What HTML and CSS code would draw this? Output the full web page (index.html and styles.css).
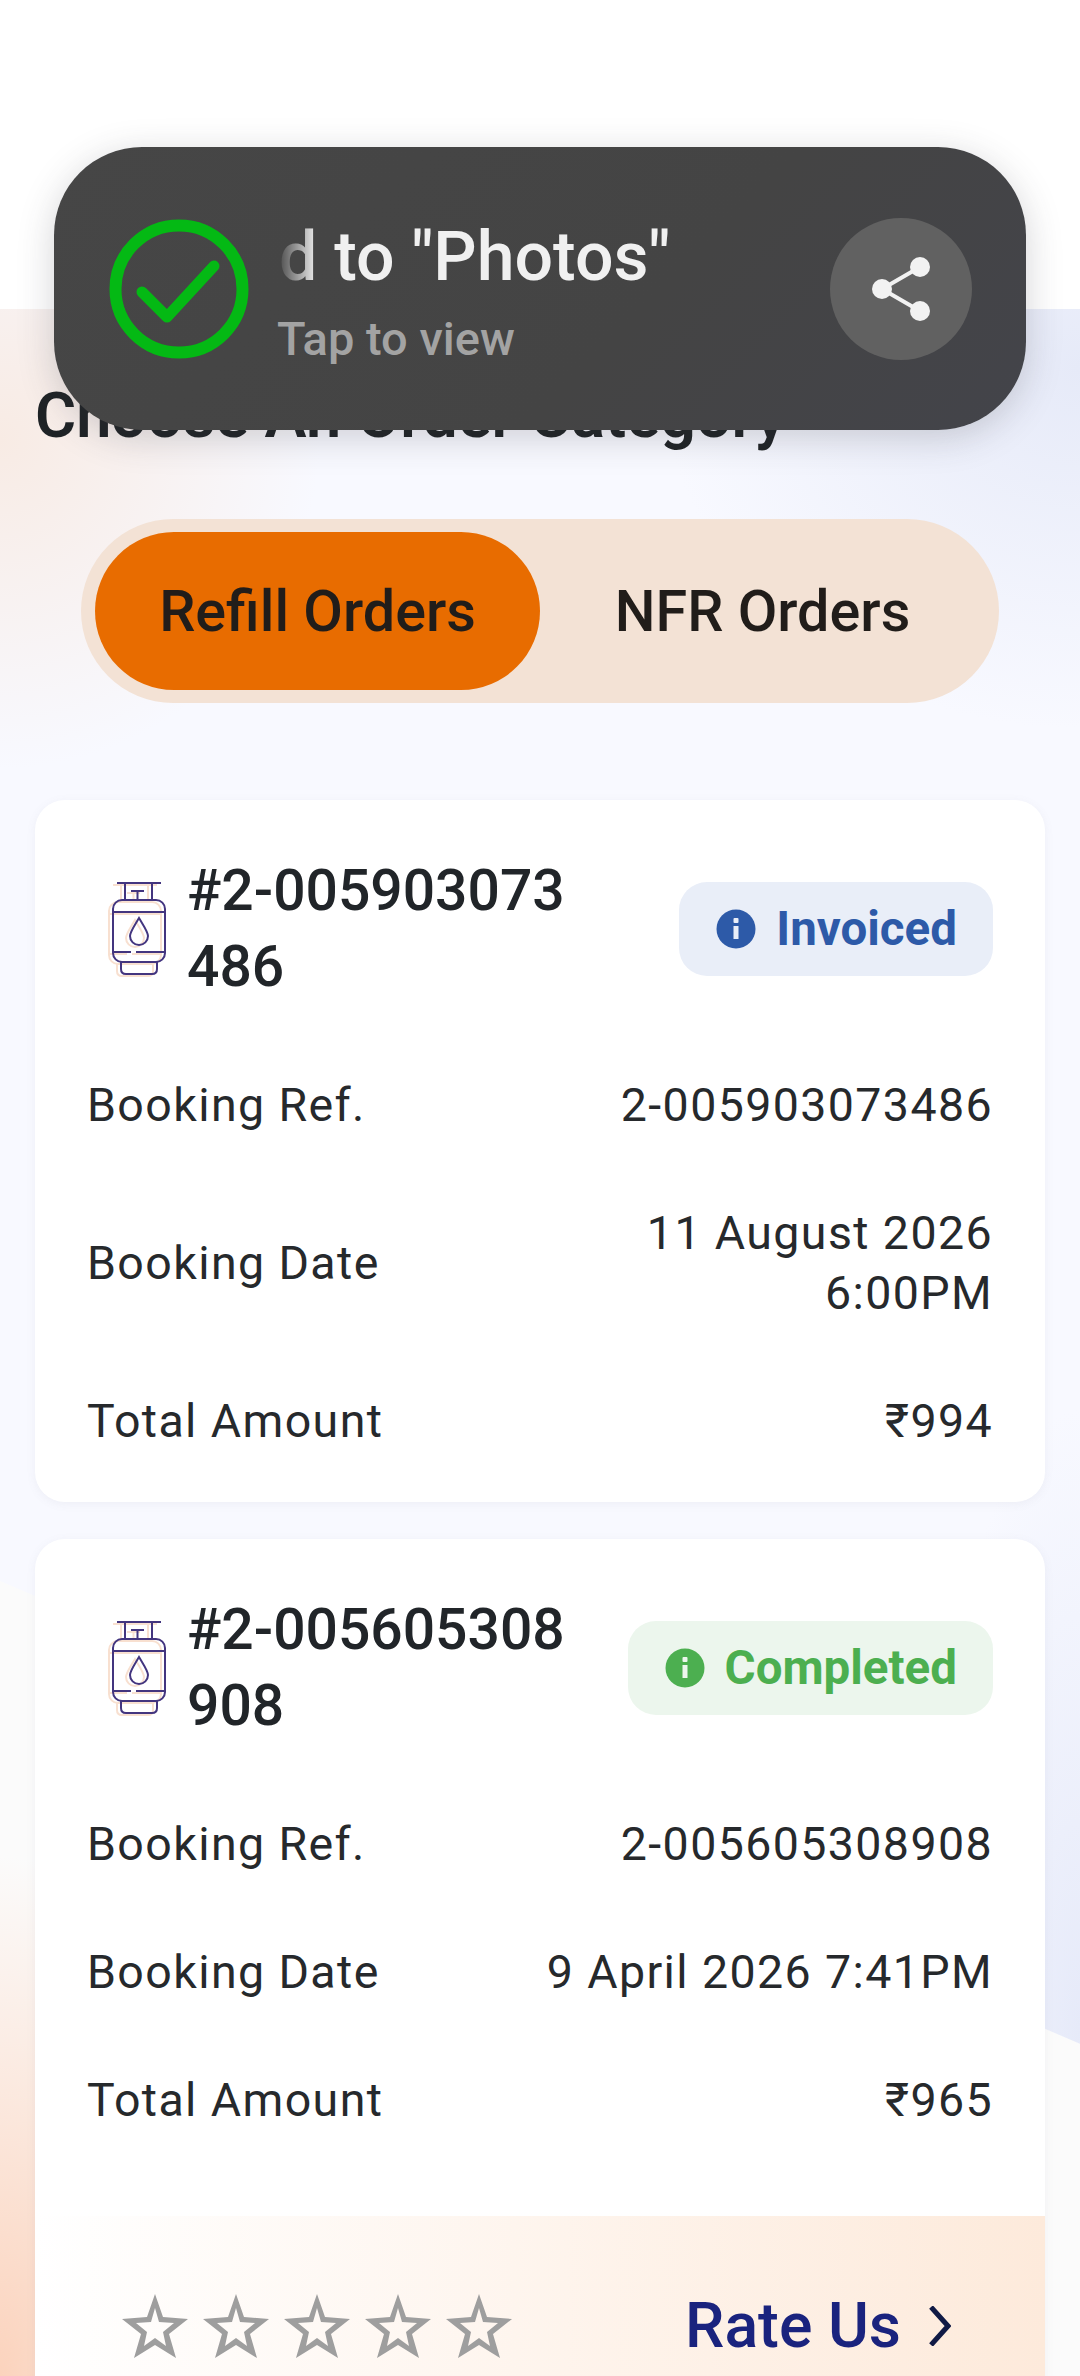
FILE: index.html
```html
<!DOCTYPE html>
<html lang="en">
<head>
    <meta charset="UTF-8">
    <meta name="viewport" content="width=device-width, initial-scale=1.0">
    <title>Choose An Order Category</title>
    <link rel="stylesheet" href="styles.css">
</head>
<body>

<svg class="defs" width="0" height="0">
    <symbol id="cylinder-lines" viewBox="0 0 64 98">
        <path d="M12 3h44M20 3v17M47 3v17M26 11h13M32.500 11v9"/>
        <rect x="8" y="20" width="52" height="62" rx="9"/>
        <path d="M8 32h52M8 72h18M31 72h29M16 82v7q0 5 5 5h26q5 0 5-5v-7"/>
        <path d="M34 38c6 10 9 14 9 18a9 9 0 0 1-18 0c0-4 3-8 9-18z"/>
    </symbol>
    <symbol id="info" viewBox="0 0 40 40">
        <circle cx="20" cy="20" r="19.500" fill="currentColor"/>
        <rect x="17.500" y="9" width="5" height="5" rx="1" fill="var(--info-dot)"/>
        <rect x="17.500" y="17" width="5" height="13" fill="var(--info-dot)"/>
    </symbol>
    <symbol id="star" viewBox="0 0 66 64">
        <path fill="#9e9e9e" fill-rule="evenodd" d="M33 0l8 23 25 2-19 15 7 24-21-13-21 13 7-24L0 25l25-2zM33 14l-4 14-15 1 11 9-3 14 11-8 11 8-3-14 11-9-15-1z"/>
    </symbol>
</svg>

<div class="status-area"></div>

<!-- download toast over the page -->
<div class="toast">
    <svg class="toast-check" viewBox="0 0 140 140">
        <circle cx="70" cy="70" r="63.500" fill="none" stroke="#04b914" stroke-width="12"/>
        <path d="M33 73l25 25 47-51" fill="none" stroke="#04b914" stroke-width="11" stroke-linecap="round" stroke-linejoin="round"/>
    </svg>
    <div class="toast-text">
        <div class="toast-title">d to "Photos"</div>
        <div class="toast-sub">Tap to view</div>
    </div>
    <div class="toast-share">
        <svg viewBox="0 0 64 64" width="64" height="64">
            <path d="M51 10L13 32l38 22" fill="none" stroke="#f2f2f2" stroke-width="4"/>
            <circle cx="51" cy="10" r="10" fill="#f2f2f2"/>
            <circle cx="13" cy="32" r="10" fill="#f2f2f2"/>
            <circle cx="51" cy="54" r="10" fill="#f2f2f2"/>
        </svg>
    </div>
</div>

<main class="content">
    <h2 class="page-title">Choose An Order Category</h2>

    <div class="tabs">
        <div class="tab tab-active">Refill Orders</div>
        <div class="tab">NFR Orders</div>
    </div>

    <section class="card">
        <div class="card-head">
            <div class="cyl-icon">
                <svg class="cyl-back"><use href="#cylinder-lines"/></svg>
                <svg class="cyl-front"><use href="#cylinder-lines"/></svg>
            </div>
            <div class="order-no">#2-005903073<br>486</div>
            <div class="badge badge-blue"><svg class="badge-icon"><use href="#info"/></svg>Invoiced</div>
        </div>
        <div class="row"><span>Booking Ref.</span><span class="val">2-005903073486</span></div>
        <div class="row row-tall"><span>Booking Date</span><span class="val">11 August 2026<br>6:00PM</span></div>
        <div class="row"><span>Total Amount</span><span class="val">₹994</span></div>
    </section>

    <section class="card card-rate">
        <div class="card-head">
            <div class="cyl-icon">
                <svg class="cyl-back"><use href="#cylinder-lines"/></svg>
                <svg class="cyl-front"><use href="#cylinder-lines"/></svg>
            </div>
            <div class="order-no">#2-005605308<br>908</div>
            <div class="badge badge-green"><svg class="badge-icon"><use href="#info"/></svg>Completed</div>
        </div>
        <div class="row"><span>Booking Ref.</span><span class="val">2-005605308908</span></div>
        <div class="row"><span>Booking Date</span><span class="val">9 April 2026 7:41PM</span></div>
        <div class="row"><span>Total Amount</span><span class="val">₹965</span></div>
        <div class="rate-band">
            <div class="stars">
                <svg class="star"><use href="#star"/></svg>
                <svg class="star"><use href="#star"/></svg>
                <svg class="star"><use href="#star"/></svg>
                <svg class="star"><use href="#star"/></svg>
                <svg class="star"><use href="#star"/></svg>
            </div>
            <div class="rate-link">Rate Us
                <svg class="chevron" viewBox="0 0 22 40"><path d="M2 1l17 19L2 39" fill="none" stroke="#101a45" stroke-width="5"/></svg>
            </div>
        </div>
    </section>
</main>

</body>
</html>
```

FILE: styles.css
```css
* {
    box-sizing: border-box;
}
html, body {
    margin: 0;
    padding: 0;
}
body {
    width: 1080px;
    height: 2376px;
    overflow: hidden;
    position: relative;
    font-family: Roboto, sans-serif;
    color: #212529;
    background-color: #fff;
}
.defs {
    position: absolute;
}
.status-area {
    height: 309px;
    background-color: #fff;
}

/* toast */
.toast {
    position: absolute;
    left: 54px;
    top: 147px;
    width: 972px;
    height: 283px;
    border-radius: 88px;
    background: linear-gradient(135deg, #464646, #444 60%, #43444a);
    box-shadow: 0 8px 36px rgba(60, 60, 70, 0.22);
    display: flex;
    align-items: center;
    padding: 0 54px 0 55px;
    z-index: 5;
}
.toast-check {
    width: 140px;
    height: 140px;
    flex: none;
}
.toast-text {
    flex: 1;
    margin-left: 28px;
    margin-top: 6px;
}
.toast-title {
    font-size: 68px;
    font-weight: 500;
    line-height: 80px;
    color: #f0f0f0;
    padding-left: 2px;
    -webkit-mask-image: linear-gradient(90deg, transparent 0, #000 40px);
    mask-image: linear-gradient(90deg, transparent 0, #000 40px);
}
.toast-sub {
    font-size: 47px;
    font-weight: 500;
    line-height: 56px;
    margin-top: 14px;
    color: #a3a3a3;
}
.toast-share {
    width: 142px;
    height: 142px;
    border-radius: 50%;
    flex: none;
    background-color: #616161;
    display: flex;
    align-items: center;
    justify-content: center;
}

/* page */
.content {
    height: 2067px;
    padding: 69px 35px 0;
    background:
        radial-gradient(ellipse 260px 520px at 0 100%, #fbd3bd, rgba(251, 211, 189, 0)),
        radial-gradient(ellipse 320px 330px at 0 130px, #f8ebe4, rgba(248, 235, 228, 0)),
        linear-gradient(203.2deg, transparent 1594px, #fbfbfb 1595px),
        radial-gradient(ellipse 420px 360px at 100% 60px, #e6eaf8, rgba(230, 234, 248, 0)),
        radial-gradient(ellipse 160px 620px at 100% 1720px, #e6eaf9, rgba(230, 234, 249, 0)),
        #f8f9ff;
}
.page-title {
    margin: 0;
    font-size: 63px;
    font-weight: 600;
    line-height: 76px;
    color: #1f2326;
}
.tabs {
    margin: 65px 46px 0;
    height: 184px;
    padding: 13px 14px;
    border-radius: 92px;
    background-color: #f3e2d5;
    display: flex;
}
.tab {
    flex: 1;
    display: flex;
    align-items: center;
    justify-content: center;
    font-size: 57.500px;
    font-weight: 500;
    color: #211d1a;
    border-radius: 79px;
}
.tab-active {
    flex: none;
    width: 445px;
    background-color: #e86c00;
}

/* order cards */
.card {
    margin-top: 37px;
    background-color: #fff;
    border-radius: 30px;
    padding: 53px 52px 17px;
    box-shadow: 0 2px 10px rgba(120, 120, 140, 0.08);
}
.tabs + .card {
    margin-top: 97px;
}
.card-rate {
    padding-bottom: 0;
    overflow: hidden;
}
.card-head {
    display: flex;
    align-items: center;
    margin-bottom: 36px;
}
.cyl-icon {
    position: relative;
    width: 64px;
    height: 98px;
    margin: 0 18px 0 18px;
    flex: none;
}
.cyl-icon svg {
    position: absolute;
    width: 64px;
    height: 98px;
    fill: none;
}
.cyl-back {
    left: -4px;
    top: 2px;
    stroke: #f8e0d0;
    stroke-width: 2;
}
.cyl-front {
    left: 0;
    top: 0;
    stroke: #43357f;
    stroke-width: 2;
}
.order-no {
    flex: 1;
    font-size: 57px;
    font-weight: 500;
    line-height: 76px;
    color: #212529;
}
.badge {
    height: 94px;
    display: flex;
    align-items: center;
    padding: 0 36px 0 37px;
    border-radius: 28px;
    font-size: 47.500px;
    font-weight: 700;
    flex: none;
}
.badge-icon {
    width: 40px;
    height: 40px;
    margin-right: 20px;
}
.badge-blue {
    background-color: #e9eef8;
    color: #2d5aa8;
    --info-dot: #e9eef8;
}
.badge-green {
    background-color: #ecf6ed;
    color: #4caf50;
    --info-dot: #ecf6ed;
}
.row {
    display: flex;
    justify-content: space-between;
    align-items: center;
    min-height: 128px;
    font-size: 46.500px;
    line-height: 60px;
    letter-spacing: 1.400px;
    color: #26292c;
}
.row-tall {
    min-height: 188px;
}
.val {
    text-align: right;
}

/* rating strip */
.rate-band {
    margin: 52px -52px 0;
    height: 200px;
    padding: 78px 94px 0 87px;
    background: linear-gradient(90deg, #fff, #fdeadb);
    display: flex;
    justify-content: space-between;
    align-items: flex-start;
}
.stars {
    display: flex;
    gap: 15px;
}
.star {
    width: 66px;
    height: 64px;
}
.rate-link {
    display: flex;
    align-items: center;
    gap: 28px;
    font-size: 62.500px;
    font-weight: 500;
    color: #1a237e;
    line-height: 64px;
}
.chevron {
    width: 22px;
    height: 40px;
}
```
